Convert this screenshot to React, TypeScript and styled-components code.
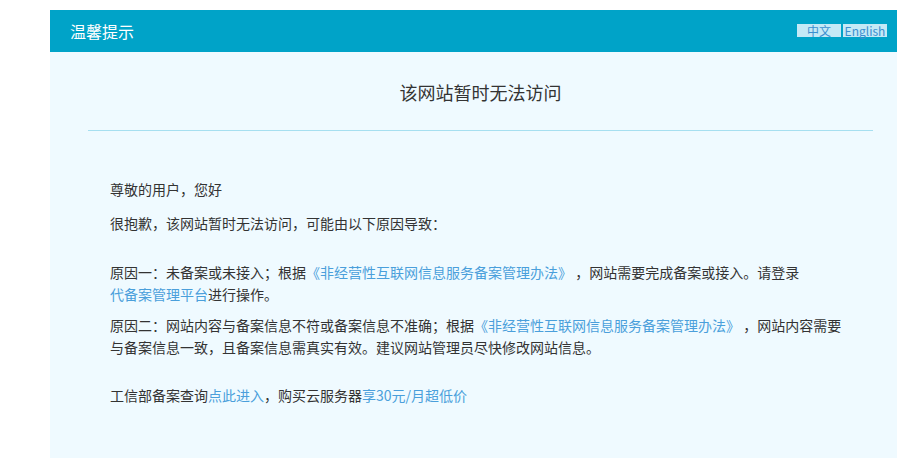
import styled, { createGlobalStyle } from 'styled-components';

const GlobalStyle = createGlobalStyle`
  html, body {
    margin: 0;
    padding: 0;
    background: #ffffff;
    overflow-x: hidden;
  }
  body {
    font-family: "Microsoft YaHei", "Noto Sans CJK SC", "Noto Sans", sans-serif;
    color: #333333;
  }
`;

const SPage = styled.div`
  width: 861px;
  margin: 10px 0 0 50px;
  background: #effaff;
  padding-bottom: 70px;
`;

const SHeader = styled.div`
  height: 42px;
  background: #00a3c8;
  display: flex;
  align-items: center;
  justify-content: space-between;
  padding: 0 24px 0 20px;
`;

const SHeaderTitle = styled.h1`
  margin: 0;
  font-size: 16px;
  font-weight: normal;
  color: #ffffff;
  line-height: 22px;
`;

const SLangs = styled.div`
  display: flex;
  gap: 2px;
  margin-bottom: 2px;
`;

const SLang = styled.a`
  width: 44px;
  height: 13px;
  line-height: 13px;
  font-size: 12px;
  text-align: center;
  background: #c4e9f6;
  color: #3b8fd0;
  text-decoration: none;
  cursor: pointer;
`;

const STitle = styled.h2`
  margin: 0;
  padding: 28px 0 26px;
  font-size: 18px;
  line-height: 24px;
  font-weight: normal;
  text-align: center;
  color: #333333;
`;

const SDivider = styled.hr`
  margin: 0 38px;
  border: 0;
  border-top: 1px solid #a6dff0;
`;

const SContent = styled.div`
  padding: 47px 60px 0;
`;

const SParagraph = styled.p<{ $top: number }>`
  margin: ${(p) => p.$top}px 0 0;
  font-size: 14px;
  line-height: 22px;
  color: #333333;
`;

const SLink = styled.a<{ $nowrap?: boolean }>`
  color: #4a9fdb;
  text-decoration: none;
  white-space: ${(p) => (p.$nowrap ? 'nowrap' : 'normal')};
`;

const App: React.FC = () => {
  return (
    <>
      <GlobalStyle />
      <SPage>
        <SHeader>
          <SHeaderTitle>温馨提示</SHeaderTitle>
          <SLangs>
            <SLang>中文</SLang>
            <SLang>English</SLang>
          </SLangs>
        </SHeader>

        <STitle>该网站暂时无法访问</STitle>
        <SDivider />

        <SContent>
          <SParagraph $top={0}>尊敬的用户，您好</SParagraph>
          <SParagraph $top={12}>很抱歉，该网站暂时无法访问，可能由以下原因导致：</SParagraph>

          <SParagraph $top={27}>
            原因一：未备案或未接入；根据<SLink>《非经营性互联网信息服务备案管理办法》</SLink> ，网站需要完成备案或接入。请登录
            <SLink $nowrap>代备案管理平台</SLink>进行操作。
          </SParagraph>

          <SParagraph $top={9}>
            原因二：网站内容与备案信息不符或备案信息不准确；根据<SLink>《非经营性互联网信息服务备案管理办法》</SLink> ，网站内容需要与备案信息一致，且备案信息需真实有效。建议网站管理员尽快修改网站信息。
          </SParagraph>

          <SParagraph $top={26}>
            工信部备案查询<SLink>点此进入</SLink>，购买云服务器<SLink>享30元/月超低价</SLink>
          </SParagraph>
        </SContent>
      </SPage>
    </>
  );
};

export default App;
